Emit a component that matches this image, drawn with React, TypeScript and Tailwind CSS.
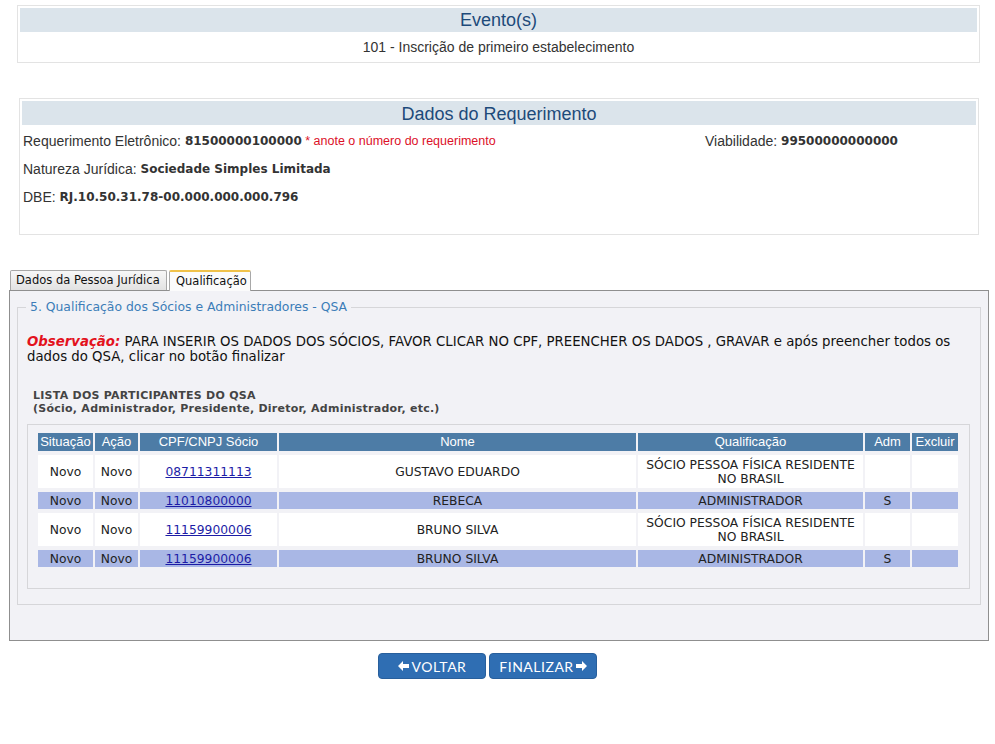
import React from "react";

type Row = { sit: string; acao: string; cpf: string; nome: string; qual: string; adm: string; alt: boolean };

const rows: Row[] = [
  { sit: "Novo", acao: "Novo", cpf: "08711311113", nome: "GUSTAVO EDUARDO", qual: "SÓCIO PESSOA FÍSICA RESIDENTE NO BRASIL", adm: "", alt: false },
  { sit: "Novo", acao: "Novo", cpf: "11010800000", nome: "REBECA", qual: "ADMINISTRADOR", adm: "S", alt: true },
  { sit: "Novo", acao: "Novo", cpf: "11159900006", nome: "BRUNO SILVA", qual: "SÓCIO PESSOA FÍSICA RESIDENTE NO BRASIL", adm: "", alt: false },
  { sit: "Novo", acao: "Novo", cpf: "11159900006", nome: "BRUNO SILVA", qual: "ADMINISTRADOR", adm: "S", alt: true },
];

function ArrowLeft() {
  return (
    <svg width="11" height="10" viewBox="0 0 11 10" className="mr-[3px]">
      <polygon points="0,5 5,0 5,3 11,3 11,7 5,7 5,10" fill="white" />
    </svg>
  );
}
function ArrowRight() {
  return (
    <svg width="11" height="10" viewBox="0 0 11 10" className="ml-[2px]">
      <polygon points="11,5 6,0 6,3 0,3 0,7 6,7 6,10" fill="white" />
    </svg>
  );
}

export default function App() {
  const cols = "grid grid-cols-[55px_43px_137px_357px_225px_45px_46px] gap-x-[2px]";
  return (
    <div className="w-[995px] h-[744px] bg-white overflow-hidden font-['Liberation_Sans',Arial,sans-serif]">
      <div className="h-[5px]" />
      {/* Evento(s) */}
      <div className="ml-[17px] w-[963px] border border-[#e3e3e3] p-[2px]">
        <div className="h-[24px] bg-[#dbe4eb] text-center text-[18px] leading-[24px] text-[#1d4a7a]">Evento(s)</div>
        <div className="h-[28px] text-center text-[14px] leading-[30px] text-[#333]">101 - Inscrição de primeiro estabelecimento</div>
      </div>
      <div className="h-[35px]" />
      {/* Dados do Requerimento */}
      <div className="ml-[19px] w-[960px] h-[137px] border border-[#e3e3e3] p-[2px]">
        <div className="h-[24px] bg-[#dbe4eb] text-center text-[18px] leading-[26px] text-[#1d4a7a]">Dados do Requerimento</div>
        <div className="pt-[2px] pl-[1px] text-[14px] text-[#333]">
          <div className="flex h-[28px] items-center">
            <div className="w-[682px] flex items-center">
              <span>Requerimento Eletrônico:&nbsp;</span>
              <span className="font-['DejaVu_Sans',sans-serif] font-bold text-[12px] text-[#333]">81500000100000</span>
              <span className="text-[12.5px] text-[#dc1028]">&nbsp;* anote o número do requerimento</span>
            </div>
            <span>Viabilidade:&nbsp;</span>
            <span className="font-['DejaVu_Sans',sans-serif] font-bold text-[12px]">99500000000000</span>
          </div>
          <div className="flex h-[28px] items-center">
            <span>Natureza Jurídica:&nbsp;</span>
            <span className="font-['DejaVu_Sans',sans-serif] font-bold text-[12px]">Sociedade Simples Limitada</span>
          </div>
          <div className="flex h-[28px] items-center">
            <span>DBE:&nbsp;</span>
            <span className="font-['DejaVu_Sans',sans-serif] font-bold text-[12px]">RJ.10.50.31.78-00.000.000.000.796</span>
          </div>
        </div>
      </div>
      <div className="h-[35px]" />
      {/* Tabs */}
      <div className="font-['DejaVu_Sans',sans-serif]">
        <div className="ml-[10px] flex items-end h-[20px] relative z-10">
          <div className="w-[157px] h-[20px] border border-b-0 border-[#a8a8a8] rounded-t-[2px] bg-gradient-to-b from-[#f7f7f7] to-[#e2e2e2] text-[11.5px] leading-[19px] pl-[5px] text-[#111]">
            Dados da Pessoa Jurídica
          </div>
          <div className="ml-[2px] w-[82px] h-[21px] -mb-px border border-b-0 border-[#a8a8a8] border-t-2 border-t-[#f0c24a] rounded-t-[2px] bg-[#fbfbfb] text-[11.5px] leading-[18px] pl-[6px] text-[#111]">
            Qualificação
          </div>
        </div>
        {/* Panel */}
        <div className="ml-[9px] w-[980px] h-[351px] border border-[#8f8f8f] bg-[#f2f2f6]">
          <fieldset className="ml-[7px] mt-[8px] w-[964px] border border-[#d6d6d9] pb-[15px]">
            <legend className="ml-[8px] px-[4px] text-[12.4px] leading-[16px] text-[#3c7db8]">
              5. Qualificação dos Sócios e Administradores - QSA
            </legend>
            <div className="pl-[9px] pr-[10px]">
              <div className="mt-[19px] text-[13.3px] leading-[15px] text-[#111]">
                <span className="font-bold italic text-[#e3121d]">Observação:</span> PARA INSERIR OS DADOS DOS SÓCIOS, FAVOR CLICAR NO CPF, PREENCHER OS DADOS , GRAVAR e após preencher todos os
                <br />
                dados do QSA, clicar no botão finalizar
              </div>
              <div className="mt-[25px] ml-[6px] text-[11px] tracking-[0.25px] leading-[13px] font-bold text-[#444]">
                <div>LISTA DOS PARTICIPANTES DO QSA</div>
                <div>(Sócio, Administrador, Presidente, Diretor, Administrador, etc.)</div>
              </div>
              <div className="mt-[9px] w-[943px] border border-[#d6d6d9] pt-[8px] pb-[21px] pl-[10px]">
                <div className="flex flex-col gap-y-[4px] w-[920px]">
                  <div className={`${cols} h-[18px] text-[13px] leading-[18px] text-white font-['Liberation_Sans',Arial,sans-serif]`}>
                    {["Situação", "Ação", "CPF/CNPJ Sócio", "Nome", "Qualificação", "Adm", "Excluir"].map((h) => (
                      <div key={h} className="bg-[#4d7ca6] text-center whitespace-nowrap overflow-hidden">{h}</div>
                    ))}
                  </div>
                  {rows.map((r, i) => {
                    const bg = r.alt ? "bg-[#a9b7e5]" : "bg-white";
                    const h = r.alt ? "h-[17px]" : "h-[33px]";
                    const cell = `${bg} flex items-center justify-center text-center`;
                    return (
                      <div key={i} className={`${cols} ${h} text-[12.3px] leading-[14px] text-[#222]`}>
                        <div className={cell}>{r.sit}</div>
                        <div className={cell}>{r.acao}</div>
                        <div className={cell}>
                          <span className="underline text-[#1c1ca6]">{r.cpf}</span>
                        </div>
                        <div className={cell}>{r.nome}</div>
                        <div className={cell}>{r.qual}</div>
                        <div className={cell}>{r.adm}</div>
                        <div className={cell}></div>
                      </div>
                    );
                  })}
                </div>
              </div>
            </div>
          </fieldset>
        </div>
      </div>
      {/* Buttons */}
      <div className="mt-[12px] ml-[378px] flex gap-[3px] font-['Lato',sans-serif]">
        <div className="w-[108px] h-[26px] rounded-[4px] bg-[#2f6eb3] border border-[#285f9c] flex items-center justify-center text-white text-[14px] tracking-[0.5px]">
          <ArrowLeft />
          VOLTAR
        </div>
        <div className="w-[108px] h-[26px] rounded-[4px] bg-[#2f6eb3] border border-[#285f9c] flex items-center justify-center text-white text-[14px] tracking-[0.5px]">
          FINALIZAR
          <ArrowRight />
        </div>
      </div>
    </div>
  );
}
